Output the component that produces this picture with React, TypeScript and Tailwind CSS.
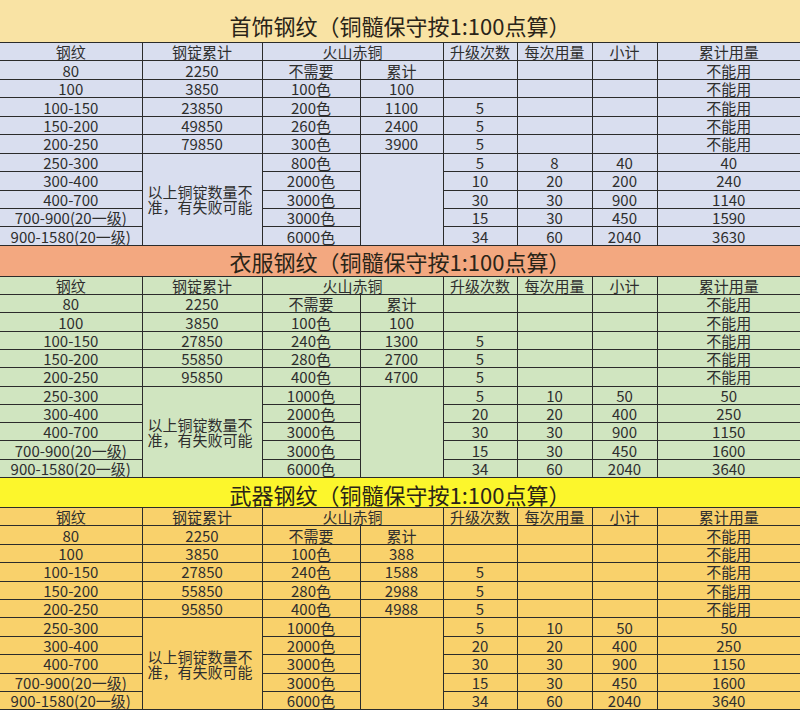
const FONT = "font-['Noto_Sans_CJK_SC','Noto_Sans',sans-serif]";

const WIDTHS = [142, 120, 98, 83, 74, 75, 65, 143];
const HEAD = ['钢纹', '钢锭累计', '火山赤铜', '升级次数', '每次用量', '小计', '累计用量'];

type Top = [string, string, string, string, string];
type Bottom = [string, string, string, string, string];

type Section = {
  title: string;
  titleCls: string;
  bodyCls: string;
  rowH: string;
  top: Top[];
  bottom: Bottom[];
};

const BOTTOM_GRADES = ['250-300', '300-400', '400-700', '700-900(20一级)', '900-1580(20一级)'];

const SECTIONS: Section[] = [
  {
    title: '首饰钢纹（铜髓保守按1:100点算）',
    titleCls: 'h-[42px] bg-[#F9E3A4] pt-[7px]',
    bodyCls: 'bg-[#D9DEEF]',
    rowH: 'h-[18.45px]',
    top: [
      ['80', '2250', '不需要', '累计', ''],
      ['100', '3850', '100色', '100', ''],
      ['100-150', '23850', '200色', '1100', '5'],
      ['150-200', '49850', '260色', '2400', '5'],
      ['200-250', '79850', '300色', '3900', '5'],
    ],
    bottom: [
      ['800色', '5', '8', '40', '40'],
      ['2000色', '10', '20', '200', '240'],
      ['3000色', '30', '30', '900', '1140'],
      ['3000色', '15', '30', '450', '1590'],
      ['6000色', '34', '60', '2040', '3630'],
    ],
  },
  {
    title: '衣服钢纹（铜髓保守按1:100点算）',
    titleCls: 'h-[30px] bg-[#F3A880] pt-[1px]',
    bodyCls: 'bg-[#D0E5C0]',
    rowH: 'h-[18.3px]',
    top: [
      ['80', '2250', '不需要', '累计', ''],
      ['100', '3850', '100色', '100', ''],
      ['100-150', '27850', '240色', '1300', '5'],
      ['150-200', '55850', '280色', '2700', '5'],
      ['200-250', '95850', '400色', '4700', '5'],
    ],
    bottom: [
      ['1000色', '5', '10', '50', '50'],
      ['2000色', '20', '20', '400', '250'],
      ['3000色', '30', '30', '900', '1150'],
      ['3000色', '15', '30', '450', '1600'],
      ['6000色', '34', '60', '2040', '3640'],
    ],
  },
  {
    title: '武器钢纹（铜髓保守按1:100点算）',
    titleCls: 'h-[29px] bg-[#FCF62C] pt-[3px]',
    bodyCls: 'bg-[#F9D16B]',
    rowH: 'h-[18.4px]',
    top: [
      ['80', '2250', '不需要', '累计', ''],
      ['100', '3850', '100色', '388', ''],
      ['100-150', '27850', '240色', '1588', '5'],
      ['150-200', '55850', '280色', '2988', '5'],
      ['200-250', '95850', '400色', '4988', '5'],
    ],
    bottom: [
      ['1000色', '5', '10', '50', '50'],
      ['2000色', '20', '20', '400', '250'],
      ['3000色', '30', '30', '900', '1150'],
      ['3000色', '15', '30', '450', '1600'],
      ['6000色', '34', '60', '2040', '3640'],
    ],
  },
];

const base = 'border border-[#2b2b2b] p-0 text-center align-middle leading-none whitespace-nowrap';

function SectionTable({ s }: { s: Section }) {
  const cell = `${base} ${s.rowH}`;
  return (
    <div className={s.bodyCls}>
      <div className={`flex items-center justify-center text-[22px] leading-none text-[#2a2418] ${s.titleCls}`}>
        {s.title}
      </div>
      <table className="w-[800px] table-fixed text-[15px] text-[#2e2e2e]">
        <colgroup>
          {WIDTHS.map((w, i) => (
            <col key={i} style={{ width: w }} />
          ))}
        </colgroup>
        <tbody>
          <tr>
            <td className={`${cell} border-l-0`}>{HEAD[0]}</td>
            <td className={cell}>{HEAD[1]}</td>
            <td className={cell} colSpan={2}>{HEAD[2]}</td>
            <td className={cell}>{HEAD[3]}</td>
            <td className={cell}>{HEAD[4]}</td>
            <td className={cell}>{HEAD[5]}</td>
            <td className={`${cell} border-r-0`}>{HEAD[6]}</td>
          </tr>
          {s.top.map((r, i) => (
            <tr key={i}>
              <td className={`${cell} border-l-0`}>{r[0]}</td>
              <td className={cell}>{r[1]}</td>
              <td className={cell}>{r[2]}</td>
              <td className={cell}>{r[3]}</td>
              <td className={cell}>{r[4]}</td>
              <td className={cell}></td>
              <td className={cell}></td>
              <td className={`${cell} border-r-0`}>不能用</td>
            </tr>
          ))}
          {s.bottom.map((r, i) => (
            <tr key={i}>
              <td className={`${cell} border-l-0`}>{BOTTOM_GRADES[i]}</td>
              {i === 0 && (
                <td className={`${base} pl-[5px] text-left leading-[17px]`} rowSpan={5}>
                  以上铜锭数量不
                  <br />
                  准，有失败可能
                </td>
              )}
              <td className={cell}>{r[0]}</td>
              {i === 0 && <td className={base} rowSpan={5}></td>}
              <td className={cell}>{r[1]}</td>
              <td className={cell}>{r[2]}</td>
              <td className={cell}>{r[3]}</td>
              <td className={`${cell} border-r-0`}>{r[4]}</td>
            </tr>
          ))}
        </tbody>
      </table>
    </div>
  );
}

export default function App() {
  return (
    <div className={`w-[800px] h-[711px] overflow-hidden bg-white ${FONT}`}>
      {SECTIONS.map((s) => (
        <SectionTable key={s.title} s={s} />
      ))}
    </div>
  );
}
